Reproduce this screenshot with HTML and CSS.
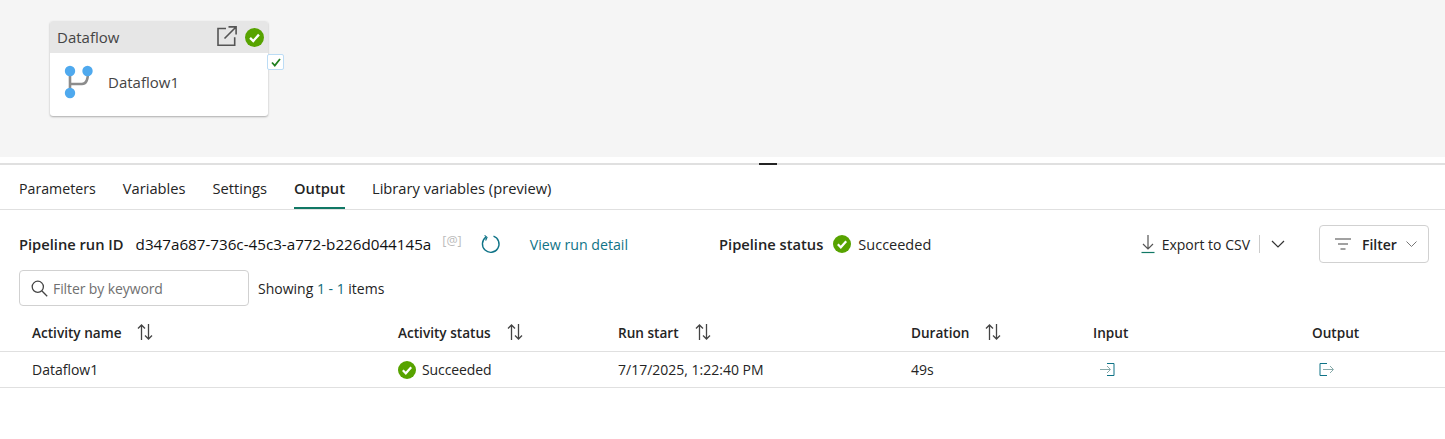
FILE: index.html
```html
<!DOCTYPE html>
<html lang="en">
<head>
  <meta charset="UTF-8">
  <title>Pipeline run</title>
  <link rel="stylesheet" href="styles.css">
</head>
<body>

  <div class="canvas">
    <div class="node">
      <div class="node-head">
        <span class="node-type">Dataflow</span>
        <svg class="node-open" width="20" height="20" viewBox="0 0 20 20" fill="none" stroke="#555" stroke-width="1.6">
          <path d="M9 2.5H1v16.7h16.7v-8"/>
          <path d="M7.5 12.5L19 1M11.5.9h7.6v7.6"/>
        </svg>
        <svg class="check" width="19" height="19" viewBox="0 0 18 18">
          <circle cx="9" cy="9" r="9" fill="#57a300"/>
          <path d="M4.8 9.3l3 3 5.4-6" fill="none" stroke="#fff" stroke-width="2.2"/>
        </svg>
      </div>
      <div class="node-body">
        <svg width="30" height="34" viewBox="0 0 30 34" fill="none">
          <path d="M6 6v24M6 19h12c4 0 6-5 6-12" stroke="#8c8c8c" stroke-width="2.6"/>
          <circle cx="6" cy="6" r="5.2" fill="#4fa9ee"/>
          <circle cx="23.5" cy="6" r="5.2" fill="#4fa9ee"/>
          <circle cx="6" cy="28" r="5.2" fill="#4fa9ee"/>
        </svg>
        <span class="node-name">Dataflow1</span>
      </div>
      <div class="node-tick">
        <svg width="10" height="9" viewBox="0 0 10 9"><path d="M1 4.5l2.8 3L9 1" fill="none" stroke="#1f7f1f" stroke-width="1.8"/></svg>
      </div>
    </div>
  </div>

  <div class="splitter"><span class="handle"></span></div>

  <nav class="tabs">
    <a class="tab first">Parameters</a>
    <a class="tab">Variables</a>
    <a class="tab">Settings</a>
    <a class="tab active">Output</a>
    <a class="tab">Library variables (preview)</a>
  </nav>

  <div class="run-bar">
    <div class="run-info">
      <b class="run-label">Pipeline run ID</b>
      <span class="run-id">d347a687-736c-45c3-a772-b226d044145a</span>
      <span class="copy">[@]</span>
      <svg class="refresh" width="20" height="20" viewBox="0 0 20 20" fill="none" stroke="#0f7387" stroke-width="1.4">
        <path d="M12.5 2.2A8.3 8.3 0 1 1 5 3.2"/>
        <path d="M3.6 1.4L6 3.4 4.6 6.4" stroke-width="1.2"/>
      </svg>
      <a class="link">View run detail</a>
    </div>
    <div class="run-status">
      <b class="run-label">Pipeline status</b>
      <svg width="18" height="18" viewBox="0 0 18 18">
        <circle cx="9" cy="9" r="9" fill="#57a300"/>
        <path d="M4.8 9.3l3 3 5.4-6" fill="none" stroke="#fff" stroke-width="2.2"/>
      </svg>
      <span class="run-state">Succeeded</span>
    </div>
    <div class="run-actions">
      <svg width="16" height="20" viewBox="0 0 16 20" fill="none" stroke="#555" stroke-width="1.2">
        <path d="M8 1v14M3 10l5 5 5-5"/>
        <path d="M1.5 18.5h13" stroke="#117865"/>
      </svg>
      <span class="export">Export to CSV</span>
      <span class="divider"></span>
      <svg width="14" height="8" viewBox="0 0 14 8" fill="none" stroke="#333" stroke-width="1.2"><path d="M1 1l6 6 6-6"/></svg>
      <button class="filter-btn">
        <svg width="16" height="12" viewBox="0 0 16 12" fill="none" stroke="#444" stroke-width="1.2"><path d="M0 1h16M3 6h10M5.5 11h5"/></svg>
        <b>Filter</b>
        <svg width="11" height="6" viewBox="0 0 11 6" fill="none" stroke="#777" stroke-width="1"><path d="M.5.5l5 5 5-5"/></svg>
      </button>
    </div>
  </div>

  <div class="search-row">
    <div class="search">
      <svg width="17" height="17" viewBox="0 0 17 17" fill="none" stroke="#444" stroke-width="1.3">
        <circle cx="6.8" cy="6.8" r="5.6"/>
        <path d="M11 11l5.2 5.2"/>
      </svg>
      <span>Filter by keyword</span>
    </div>
    <span class="showing">Showing <em>1 - 1</em> items</span>
  </div>

  <div class="table">
    <div class="row head">
      <div class="cell">Activity name <svg class="sort" width="16" height="16" viewBox="0 0 16 16" fill="none" stroke="#444" stroke-width="1.3"><path d="M4.5 16V1M1 4.5L4.5 1 8 4.5M11.5 0v15M8 11.5l3.5 3.5 3.5-3.5"/></svg></div>
      <div class="cell">Activity status <svg class="sort" width="16" height="16" viewBox="0 0 16 16" fill="none" stroke="#444" stroke-width="1.3"><path d="M4.5 16V1M1 4.5L4.5 1 8 4.5M11.5 0v15M8 11.5l3.5 3.5 3.5-3.5"/></svg></div>
      <div class="cell">Run start <svg class="sort" width="16" height="16" viewBox="0 0 16 16" fill="none" stroke="#444" stroke-width="1.3"><path d="M4.5 16V1M1 4.5L4.5 1 8 4.5M11.5 0v15M8 11.5l3.5 3.5 3.5-3.5"/></svg></div>
      <div class="cell">Duration <svg class="sort" width="16" height="16" viewBox="0 0 16 16" fill="none" stroke="#444" stroke-width="1.3"><path d="M4.5 16V1M1 4.5L4.5 1 8 4.5M11.5 0v15M8 11.5l3.5 3.5 3.5-3.5"/></svg></div>
      <div class="cell">Input</div>
      <div class="cell">Output</div>
    </div>
    <div class="row">
      <div class="cell">Dataflow1</div>
      <div class="cell status">
        <svg width="18" height="18" viewBox="0 0 18 18">
          <circle cx="9" cy="9" r="9" fill="#57a300"/>
          <path d="M4.8 9.3l3 3 5.4-6" fill="none" stroke="#fff" stroke-width="2.2"/>
        </svg>
        Succeeded
      </div>
      <div class="cell">7/17/2025, 1:22:40 PM</div>
      <div class="cell">49s</div>
      <div class="cell icon-cell">
        <svg width="15" height="13" viewBox="0 0 15 13" fill="none">
          <path d="M7 .5h7v12H7" stroke="#0f7387"/>
          <path d="M0 6.5h10M7 3l3.5 3.5L7 10" stroke="#8aa"/>
        </svg>
      </div>
      <div class="cell icon-cell">
        <svg width="15" height="13" viewBox="0 0 15 13" fill="none">
          <path d="M8 .5H1v12h7" stroke="#0f7387"/>
          <path d="M4 6.5h10M11 3l3.5 3.5L11 10" stroke="#8aa"/>
        </svg>
      </div>
    </div>
  </div>

</body>
</html>
```

FILE: styles.css
```css
body {
  font-family: "Open Sans", "Noto Sans", sans-serif;
  font-size: 14px;
  margin: 0;
  background: #fff;
  color: #242424;
}
svg { flex: none; }

.canvas {
  height: 157px;
  background: #f5f5f5;
  padding: 21px 0 0 50px;
  box-sizing: border-box;
}
.node {
  position: relative;
  width: 218px;
  height: 95px;
  background: #fff;
  border-radius: 3px;
  box-shadow: 0 1px 2px rgba(0,0,0,0.3);
}
.node-head {
  height: 32px;
  background: #e6e6e6;
  border-radius: 3px 3px 0 0;
  display: flex;
  align-items: center;
  padding: 0 4px 0 7px;
  color: #444;
  font-size: 15px;
}
.node-type { flex: 1; }
.node-open { margin-right: 8px; margin-top: -2px; }
.node-body {
  display: flex;
  align-items: center;
  gap: 14px;
  padding: 12px 0 0 14px;
  color: #444;
  font-size: 15px;
}
.node-tick {
  position: absolute;
  left: 217px;
  top: 33px;
  width: 17px;
  height: 16px;
  box-sizing: border-box;
  background: #fff;
  border: 1px solid #bcdcf5;
  border-radius: 2px;
  display: flex;
  align-items: center;
  justify-content: center;
}

.splitter {
  height: 6px;
  display: flex;
  align-items: flex-end;
  padding-left: 759px;
  border-bottom: 2px solid #e0e0e0;
  margin-bottom: -2px;
}
.handle {
  width: 18px;
  height: 2px;
  background: #242424;
  margin-bottom: -2px;
}

.tabs {
  display: flex;
  gap: 27px;
  height: 44px;
  padding: 2px 0 0 19px;
  border-bottom: 1px solid #e0e0e0;
  font-size: 14.7px;
}
.tab {
  line-height: 47px;
  height: 44px;
  box-sizing: border-box;
}
.tab.first { font-size: 14.2px; }
.tab.active {
  font-weight: 600;
  font-size: 14.7px;
  border-bottom: 2px solid #117865;
}

.run-bar {
  display: flex;
  align-items: center;
  height: 38px;
  margin-top: 15px;
  padding: 0 16px 0 19px;
}
.run-info, .run-status, .run-actions {
  display: flex;
  align-items: center;
}
.run-label { font-weight: 600; font-size: 14.7px; }
.run-id { margin-left: 12px; color: #111; font-size: 15.2px; }
.copy { margin-left: 11px; font-size: 12.5px; color: #bbb; margin-top: -7px; }
.refresh { margin-left: 19px; }
.link { margin-left: 29px; color: #0f7387; font-size: 14.2px; }
.run-status { margin-left: 91px; gap: 10px; }
.run-state { font-size: 14.5px; margin-left: -3px; }
.run-actions { margin-left: auto; }
.export { margin-left: 6px; }
.divider { width: 1px; height: 18px; background: #ccc; margin: 0 11px 0 9px; }
.filter-btn {
  display: flex;
  align-items: center;
  width: 110px;
  height: 38px;
  margin-left: 34px;
  padding: 0 10px 0 15px;
  background: #fff;
  border: 1px solid #d1d1d1;
  border-radius: 4px;
  font: inherit;
  color: inherit;
}
.filter-btn b { margin: 0 9px 0 11px; font-weight: 600; }

.search-row {
  display: flex;
  align-items: center;
  gap: 9px;
  padding-left: 19px;
  margin-top: 7px;
}
.search {
  display: flex;
  align-items: center;
  gap: 5px;
  width: 230px;
  height: 36px;
  box-sizing: border-box;
  padding-left: 11px;
  border: 1px solid #d1d1d1;
  border-radius: 4px;
  color: #707070;
  letter-spacing: -0.1px;
}
.showing em { font-style: normal; color: #0f6a7a; }

.table { margin-top: 9px; }
.row {
  display: grid;
  grid-template-columns: 366px 220px 293px 182px 219px 1fr;
  height: 35px;
  padding-left: 32px;
  align-items: center;
  border-bottom: 1px solid #e0e0e0;
}
.row.head { font-weight: 600; font-size: 13.6px; padding-bottom: 2px; height: 34px; }
.cell { display: flex; align-items: center; }
.sort { margin-left: 16px; }
.status { gap: 6px; letter-spacing: -0.1px; }
.icon-cell { padding-left: 7px; }
```
